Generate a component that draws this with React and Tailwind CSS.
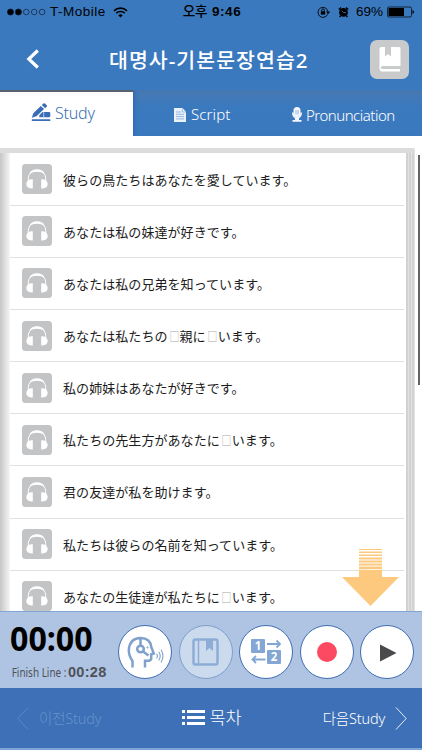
const KO = "font-['Noto_Sans','Noto_Sans_CJK_KR',sans-serif]";

const sentences = [
  "彼らの鳥たちはあなたを愛しています。",
  "あなたは私の妹達が好きです。",
  "あなたは私の兄弟を知っています。",
  "あなたは私たちの□親に□います。",
  "私の姉妹はあなたが好きです。",
  "私たちの先生方があなたに□います。",
  "君の友達が私を助けます。",
  "私たちは彼らの名前を知っています。",
  "あなたの生徒達が私たちに□います。",
];

function StatusBar() {
  return (
    <div className="grid h-6 grid-cols-[1fr_auto_1fr] items-center pl-[7px] pr-2 text-black font-['Liberation_Sans','Noto_Sans_CJK_KR',sans-serif]">
      <div className="flex items-center">
        <svg width="39" height="8" viewBox="0 0 39 8" fill="none" stroke="#10203a" strokeWidth="0.7">
          <circle cx="3.5" cy="4" r="3.1" fill="#000" />
          <circle cx="11.4" cy="4" r="3.1" fill="#000" />
          <circle cx="19.3" cy="4" r="2.8" />
          <circle cx="27.2" cy="4" r="2.8" />
          <circle cx="35.1" cy="4" r="2.8" />
        </svg>
        <span className="ml-[4px] w-[56px] text-[13.5px] leading-none tracking-[0.5px]">T-Mobile</span>
        <svg className="ml-[7px]" width="15" height="11" viewBox="0 0 15 11" fill="none" stroke="#000" strokeWidth="1.7">
          <path d="M1 3.8a9.4 9.4 0 0 1 13 0M3.3 6.2a6 6 0 0 1 8.4 0" />
          <path d="M7.5 10.5 5.3 8.3a3.2 3.2 0 0 1 4.4 0z" fill="#000" stroke="none" />
        </svg>
      </div>
      <span className="ml-[3px] text-[13.5px] font-bold leading-none tracking-[0.6px]">
        <span className="font-medium tracking-normal">오후</span> 9:46
      </span>
      <div className="flex items-center justify-end">
        <svg width="14" height="12" viewBox="0 0 14 12" fill="none" stroke="#000" strokeWidth="0.9">
          <path d="M10.6 8.3A5 5 0 1 1 10.9 5.5" />
          <path d="M9 5.4h4.2L11 8.2z" fill="#000" stroke="none" />
          <rect x="3.8" y="5.2" width="4.4" height="3.4" fill="#000" stroke="none" />
          <path d="M4.7 5.4V4.2a1.3 1.3 0 0 1 2.6 0v1.2" />
        </svg>
        <svg className="ml-[7px]" width="11" height="12" viewBox="0 0 11 12">
          <circle cx="5.5" cy="6.4" r="4.4" />
          <path d="M.8 3.5 3 1.5M10.2 3.5 8 1.5M2.6 9.6 1.6 11M8.4 9.6l1 1.4" stroke="#000" strokeWidth="1.4" />
          <path d="M3.6 4.7 5.5 6.6H8" fill="none" stroke="#3b79be" strokeWidth="0.9" />
        </svg>
        <span className="ml-[7px] text-[13.5px] leading-none">69%</span>
        <svg className="ml-[4px]" width="27" height="12" viewBox="0 0 27 12">
          <rect x=".5" y="1" width="24" height="10" rx="1.5" fill="none" stroke="#000" strokeWidth="0.7" />
          <rect x="1.5" y="2" width="15.5" height="8" />
          <path d="M25.5 4v4q1.5-.6 1.5-2t-1.5-2" />
        </svg>
      </div>
    </div>
  );
}

function Header() {
  return (
    <header className="flex h-[66px] items-center pl-[26px] pr-[13px]">
      <svg className="mt-[4px]" width="14" height="20" viewBox="0 0 14 20" fill="none" stroke="#fff" strokeWidth="3.2">
        <path d="M11.8 1.5 2.8 10l9 8.5" />
      </svg>
      <h1 className={`${KO} ml-[69px] mt-[6px] flex-1 whitespace-nowrap text-[20.5px] font-medium leading-none tracking-[1.05px] text-white`}>
        대명사-기본문장연습2
      </h1>
      <button className="mt-[12px] mb-2 flex size-[39px] items-center justify-center rounded-[7px] bg-[#c9cacb]">
        <svg width="22" height="25" viewBox="0 0 22 25" fill="#fff">
          <path d="M2.5 0H6v9.5L9 7l3 2.500V0h8a1.500 1.500 0 0 1 1.500 1.500V19H3.500q-1.500 0-1.500 1.500T3.500 22H21v2.500H3A3 3 0 0 1 .5 21.500V2q0-2 2-2" />
          <path d="M3.500 19.700H21v1.500H3.500z" fill="#c9cacb" />
        </svg>
      </button>
    </header>
  );
}

function Tabs() {
  return (
    <nav className={`${KO} flex h-[46px] text-white`}>
      <div className="flex w-[133px] items-center border-t-2 border-[#59616d] bg-white pl-[31px] text-[#3b6fb4]">
        <svg className="-mt-1" width="20" height="19" viewBox="0 0 20 19" fill="#3b6db6">
          <path d="M.8 14.800 2.300 10.300 9.800 3l3.300 3.100L5.500 13.300zM10.800 2.100 12.400.6q.8-.7 1.600 0l1.700 1.600q.7.800 0 1.500L14.100 5.200z" />
          <path d="M8.300 12.300 11.500 9H18q1.300 0 1.300 1.300V13q0 1.300-1.300 1.300H8.300zM.8 16.200h18.500V18H.8z" />
          <path d="M12.700 9v5.300" stroke="#fff" strokeWidth="0.6" />
        </svg>
        <span className="ml-[4px] -mt-[3px] text-[16px] font-light leading-none tracking-[-0.2px]">Study</span>
      </div>
      <div className="flex flex-1 items-center bg-linear-to-b from-[#4779b3] via-[#3b79be] via-35% to-[#3b79be] pl-[41px] pt-[3px] shadow-[inset_4px_0_4px_-3px_#2b65ad]">
        <svg width="12" height="14" viewBox="0 0 12 14">
          <path d="M0 0h8.500L12 3.700V14H0z" fill="#e9f2fb" />
          <path d="M2 4h5M2 6.300h8M2 8.600h8M2 10.900h8" stroke="#7fa7d4" strokeWidth="0.8" />
          <path d="M8.300.3v3.700H12" fill="none" stroke="#7fa7d4" strokeWidth="0.7" />
        </svg>
        <span className="ml-[5px] w-[40px] text-[15px] font-light leading-none tracking-[0.1px]">Script</span>
        <svg className="ml-[61px]" width="10" height="15" viewBox="0 0 10 15" fill="#f4f8fd">
          <rect x="1.500" y="0" width="7" height="10" rx="3.500" />
          <path d="M0 5.500h1.500Q2 10 5 10t3.500-4.500H10q0 4-3 5.700V13h2.500v1.700H.5V13H3v-1.800Q0 9.500 0 5.500" />
          <path d="M4 3v4.500M6 3v4.500" stroke="#6d9bd0" strokeWidth="0.7" />
        </svg>
        <span className="ml-[4px] mt-[1px] text-[15px] font-light leading-none tracking-[-0.500px]">Pronunciation</span>
      </div>
    </nav>
  );
}

function HeadphoneIcon() {
  return (
    <svg width="30" height="30" viewBox="0 0 30 30" className="shrink-0">
      <rect width="30" height="30" rx="3.500" fill="#c3c4c5" />
      <path d="M6.300 17V14.500a8.700 8.300 0 0 1 17.400 0V17" fill="none" stroke="#fff" strokeWidth="1" />
      <path d="M7.300 9.500q2.500-4.200 7.700-4.200t7.700 4.200q-7.700-3.500-15.400 0" fill="#fff" />
      <path d="M10.800 15.200v9.300H9.500Q4.500 24 4.300 20q.2-4.200 5-4.800zM19.200 15.200v9.300h1.300q5-.5 5.200-4.500-.2-4.200-5-4.800z" fill="#fff" />
    </svg>
  );
}

function Sentence({ text }) {
  return (
    <li className="flex h-[52.150px] shrink-0 items-center border-b border-[#e0e0e0] pl-[12px]">
      <HeadphoneIcon />
      <span className="ml-[11px] whitespace-nowrap text-[13.050px] leading-none text-[#1d1d1d] font-['Noto_Sans_CJK_JP',sans-serif]">
        {text.split("").map((ch, i) =>
          ch === "□" ? (
            <span key={i} className="inline-block w-[12px] scale-x-75 text-[#aaaaaa]">{ch}</span>
          ) : (
            ch
          )
        )}
      </span>
    </li>
  );
}

function SentenceList() {
  return (
    <main className="relative flex h-[475px] bg-white pt-[12px]">
      <div className="flex w-[415px] overflow-hidden rounded-tr-[2px] bg-[#dcdcdc] pt-[5px]">
        <div className="w-[10px] shrink-0 bg-linear-to-r from-[#c6c6c6] to-[#f6f6f6]" />
        <div className="w-[396px] overflow-hidden bg-white">
          <ul className="flex w-[394px] flex-col pt-[0.6px]">
            {sentences.map((text) => (
              <Sentence key={text} text={text} />
            ))}
          </ul>
        </div>
        <div className="w-[9px] shrink-0 bg-[repeating-linear-gradient(90deg,#d2d2d2_0_2px,#e3e3e3_2px_3px)]" />
      </div>
      <div className="ml-[3px] mt-[7px] h-[230px] w-[2px] bg-[#636363]" />
      <svg className="absolute left-[342px] top-[413px]" width="58" height="58" viewBox="0 0 58 58" fill="#fdc97f">
        <path d="M17 0h23v1H17zM17 2.500h23v1.500H17zM17 5.500h23v1.500H17zM17 8.500h23v2H17zM17 11.500h23v2H17zM17 14.500h23v2H17zM17 17.500h23v2.500H17zM17 20.700h23V28h17L28.500 57 0 28h17z" />
      </svg>
    </main>
  );
}

function RoundButton({ children, disabled }) {
  return (
    <button
      className={
        disabled
          ? "flex size-[54px] items-center justify-center rounded-full border border-[#7c9fce] bg-[#cbdaed]"
          : "flex size-[54px] items-center justify-center rounded-full border border-[#3e6db2] bg-white"
      }
    >
      {children}
    </button>
  );
}

function Player() {
  return (
    <section className="flex h-[77px] border-t border-[#83a5d1] bg-[#aec4e2]">
      <div className="w-[118px] shrink-0 pl-[10px] pt-[11px]">
        <div className="origin-left whitespace-nowrap text-[33.500px] font-bold leading-[30px] text-black scale-x-[0.96] font-['Noto_Sans',sans-serif]">
          00:00
        </div>
        <div className="mt-[11px] flex items-center whitespace-nowrap leading-[17px] text-[#4e5258]">
          <span className="w-[55px] origin-left scale-x-[0.83] pl-[2px] text-[12px] font-['Noto_Sans',sans-serif]">Finish Line :</span>
          <span className="ml-[3px] text-[14.500px] font-bold tracking-[0.3px] font-['Liberation_Sans',sans-serif]">00:28</span>
        </div>
      </div>
      <div className="flex gap-[6.500px] pt-[13px]">
        <RoundButton>
          <svg width="37" height="32" viewBox="0 0 37 32" fill="none" stroke="#7fa1cc" strokeWidth="2.500">
            <path d="M5.500 31.500V25Q1.800 20 1.800 14 2.500 2.500 13.500 2 23.500 2.300 24.200 11L26.800 17.500l-2.600.8v4.200q-.5 2.300-2.700 2.300h-3.500v6.700" />
            <circle cx="13.500" cy="13" r="3.300" />
            <path d="M13.500 2v7.500M16 15.500l5.500 4" />
            <circle cx="20.500" cy="11.500" r=".6" strokeWidth="1" />
            <path d="M29.500 17.800q2 2.200 0 4.700M31.700 15.800q3 4.200 0 8.700M34 13.800q4 6.200 0 12.700" strokeWidth="1.100" />
          </svg>
        </RoundButton>
        <RoundButton disabled>
          <svg width="27" height="28" viewBox="0 0 27 28" fill="none" stroke="#8dadd6" strokeWidth="2.500">
            <rect x="1.500" y="1.500" width="24" height="25" rx="2" />
            <path d="M6.500 2v24" strokeWidth="1.500" />
            <path d="M14 2h7v11l-3.500-3L14 13z" fill="#8dadd6" stroke="none" />
          </svg>
        </RoundButton>
        <RoundButton>
          <svg width="31" height="26" viewBox="0 0 31 26" fill="#83a6d4" className="font-['Noto_Sans',sans-serif]">
            <rect width="14" height="14" rx="1" y="0" />
            <rect x="16" y="11" width="14" height="14" rx="1" />
            <g fill="none" stroke="#83a6d4" strokeWidth="1.800">
              <path d="M16 5h13M25.500 1.500 29 5l-3.500 3.500M14.500 20.500H1.500M5 17l-3.500 3.500L5 24" />
            </g>
            <text x="7" y="11.200" textAnchor="middle" fontSize="11.500" fontWeight="700" fill="#fff">1</text>
            <text x="23" y="22.200" textAnchor="middle" fontSize="11.500" fontWeight="700" fill="#fff">2</text>
          </svg>
        </RoundButton>
        <RoundButton>
          <span className="size-5 rounded-full bg-[#fb4a62]" />
        </RoundButton>
        <RoundButton>
          <svg width="17" height="18" viewBox="0 0 17 18" fill="#4a4a4c" className="ml-[2px] mt-[2px]">
            <path d="M0 .5 16.500 9 0 17.500z" />
          </svg>
        </RoundButton>
      </div>
    </section>
  );
}

function BottomNav() {
  return (
    <footer className={`${KO} grid h-[62px] grid-cols-[1fr_auto_1fr] items-center border-b-2 border-[#7ea5d8] bg-[#3d70b6] pl-[17px] pr-[15px] leading-none text-white`}>
      <div className="flex items-center text-[#6791cc]">
        <svg width="12" height="23" viewBox="0 0 12 23" fill="none" stroke="#5b88c6" strokeWidth="1">
          <path d="M11 .5.8 11.500 11 22.500" />
        </svg>
        <span className="ml-[10px] text-[14.500px] font-light tracking-[-0.2px]">이전Study</span>
      </div>
      <div className="flex items-center">
        <svg width="23" height="16" viewBox="0 0 23 16" fill="#fff">
          <path d="M0 0h3v3H0zM5 0h18v3H5zM0 6h3v3H0zM5 6h18v3H5zM0 12h3v3H0zM5 12h18v3H5z" />
        </svg>
        <span className="ml-[4px] text-[17.500px] font-light">목차</span>
      </div>
      <div className="flex items-center justify-end">
        <span className="text-[14.500px] font-light tracking-[-0.2px]">다음Study</span>
        <svg className="ml-[10px]" width="12" height="23" viewBox="0 0 12 23" fill="none" stroke="#e3edf9" strokeWidth="1">
          <path d="M1 .5 11.200 11.500 1 22.500" />
        </svg>
      </div>
    </footer>
  );
}

export default function App() {
  return (
    <div className="flex h-[750px] w-[422px] flex-col overflow-hidden bg-[#3b79be]">
      <StatusBar />
      <Header />
      <Tabs />
      <SentenceList />
      <Player />
      <BottomNav />
    </div>
  );
}
